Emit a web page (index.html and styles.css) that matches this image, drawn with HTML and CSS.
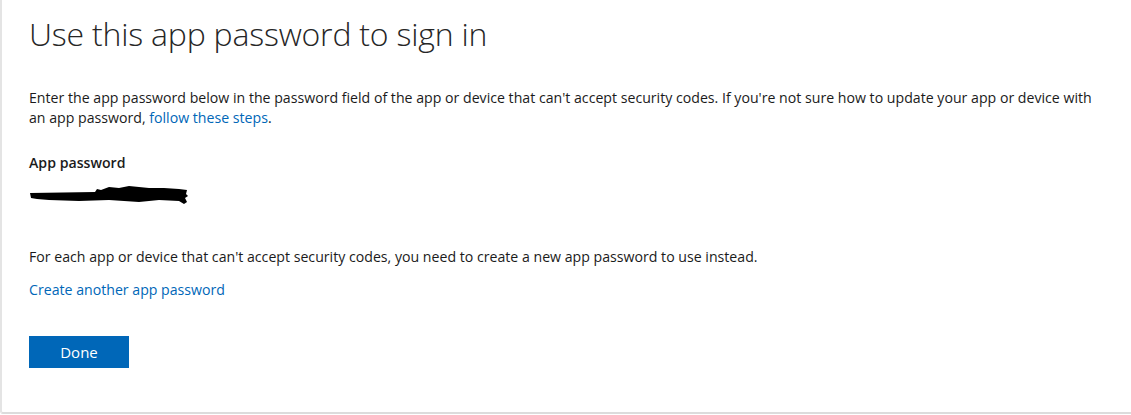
FILE: index.html
```html
<!DOCTYPE html>
<html lang="en">
<head>
<meta charset="utf-8">
<title>App password</title>
<link rel="stylesheet" href="styles.css">
</head>
<body>
<main class="card">
  <h1 class="title">Use this app password to sign in</h1>
  <p class="intro"><span>Enter the app password below in the password field of the app or device that can't accept security codes. If you're not sure how to update your app or device with</span> <span>an app password,</span> <a class="link" href="#">follow these steps</a><span>.</span></p>
  <h2 class="label">App password</h2>
  <div class="secret" aria-label="redacted">
    <svg width="160" height="22" viewBox="0 0 160 22">
      <path d="M1 9 L66 8 L68 5 L72 6 L80 3 L90 4 L100 2 L110 3 L120 4 L135 4 L150 5 L158 6 L157 10 L159 12 L156 14 L158 18 L155 20 L150 17 L130 16 L110 18 L80 16 L50 17 L20 16 L8 15 L2 14 Z" fill="#000"/>
    </svg>
  </div>
  <p class="note">For each app or device that can't accept security codes, you need to create a new app password to use instead.</p>
  <a class="link create" href="#">Create another app password</a>
  <div class="actions">
    <button class="btn" type="button">Done</button>
  </div>
</main>
</body>
</html>
```
FILE: styles.css
```css
html, body {
  margin: 0;
  padding: 0;
  background: #ffffff;
}
body {
  font-family: "Open Sans", "Noto Sans", "Liberation Sans", sans-serif;
  color: #1b1b1b;
  width: 1131px;
  height: 415px;
  overflow: hidden;
}
.card {
  box-sizing: border-box;
  width: 1140px;
  height: 414px;
  border-left: 2px solid #e4e4e4;
  border-bottom: 2px solid #dcdcdc;
  border-bottom-left-radius: 3px;
  padding: 14px 0 0 27px;
  display: flex;
  flex-direction: column;
  align-items: flex-start;
}
.title {
  margin: 0;
  font-size: 32px;
  font-weight: 300;
  line-height: 40px;
  color: #262626;
  letter-spacing: -0.2px;
}
.intro {
  margin: 34px 0 0 0;
  font-size: 14.15px;
  line-height: 20px;
  width: 1078px;
}
.link {
  color: #0067b8;
  text-decoration: none;
}
.label {
  margin: 25px 0 0 0;
  font-size: 14.15px;
  font-weight: 600;
  line-height: 20px;
}
.secret {
  margin-top: 11px;
  height: 22px;
  line-height: 0;
}
.note {
  margin: 41px 0 0 0;
  font-size: 14.15px;
  line-height: 20px;
}
.create {
  margin-top: 13px;
  font-size: 14.15px;
  line-height: 20px;
}
.actions {
  margin-top: 36px;
}
.btn {
  width: 100px;
  height: 32px;
  border: 0;
  background: #0067b8;
  color: #ffffff;
  font-family: inherit;
  font-size: 15px;
  padding: 0;
  cursor: pointer;
}
```
